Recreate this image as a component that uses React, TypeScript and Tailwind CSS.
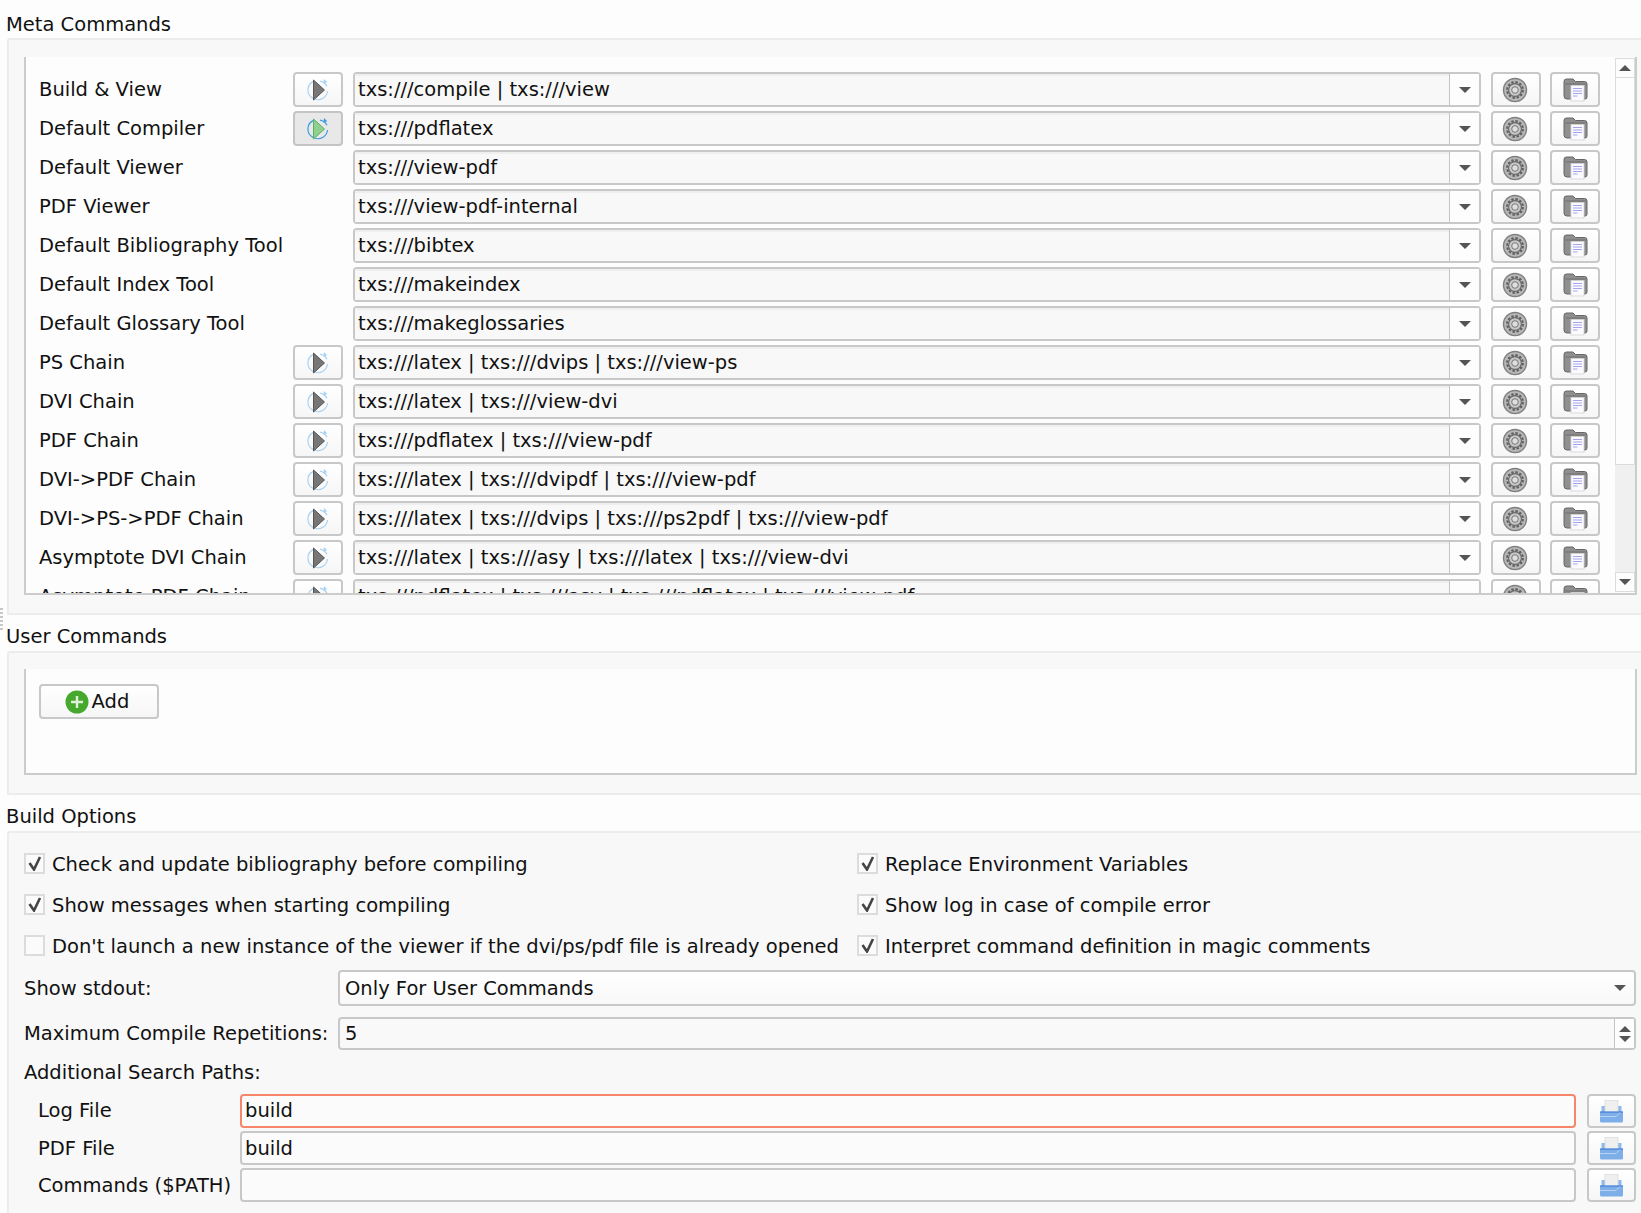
import type { ReactNode } from 'react';

const font = "font-['DejaVu_Sans',sans-serif]";

const commands = [
  { label: 'Build & View', value: 'txs:///compile | txs:///view', run: 'normal' },
  { label: 'Default Compiler', value: 'txs:///pdflatex', run: 'active' },
  { label: 'Default Viewer', value: 'txs:///view-pdf' },
  { label: 'PDF Viewer', value: 'txs:///view-pdf-internal' },
  { label: 'Default Bibliography Tool', value: 'txs:///bibtex' },
  { label: 'Default Index Tool', value: 'txs:///makeindex' },
  { label: 'Default Glossary Tool', value: 'txs:///makeglossaries' },
  { label: 'PS Chain', value: 'txs:///latex | txs:///dvips | txs:///view-ps', run: 'normal' },
  { label: 'DVI Chain', value: 'txs:///latex | txs:///view-dvi', run: 'normal' },
  { label: 'PDF Chain', value: 'txs:///pdflatex | txs:///view-pdf', run: 'normal' },
  { label: 'DVI->PDF Chain', value: 'txs:///latex | txs:///dvipdf | txs:///view-pdf', run: 'normal' },
  { label: 'DVI->PS->PDF Chain', value: 'txs:///latex | txs:///dvips | txs:///ps2pdf | txs:///view-pdf', run: 'normal' },
  { label: 'Asymptote DVI Chain', value: 'txs:///latex | txs:///asy | txs:///latex | txs:///view-dvi', run: 'normal' },
  { label: 'Asymptote PDF Chain', value: 'txs:///pdflatex | txs:///asy | txs:///pdflatex | txs:///view-pdf', run: 'normal' },
];

const btn =
  'flex items-center justify-center shrink-0 rounded-[4px] border-2 border-[#c8c8c8] bg-gradient-to-b from-[#ffffff] to-[#f6f6f6]';

function RunIcon({ active }: { active?: boolean }) {
  const ring = active ? '#3d9be0' : '#a9d2f2';
  return (
    <svg width="24" height="24" viewBox="0 0 24 24" fill="none">
      <path d="M7 3.6A9.5 9.5 0 0 0 7 20.4" stroke={ring} strokeWidth="1.2" />
      <path d="M14 3.2c3 .5 5.5 2.4 7 5M21.5 13a9.5 9.5 0 0 1-13 8" stroke={ring} strokeWidth="1.2" />
      <path d="M18 1l3.3 3.2-3.9 1.3z" fill={ring} />
      <path
        d="M7.5 2L18.5 12 7.5 22z"
        fill={active ? '#8fd08f' : '#777'}
        stroke={active ? '#5cae6a' : '#555'}
        strokeWidth="1"
      />
    </svg>
  );
}

function GearIcon() {
  return (
    <svg width="26" height="26" viewBox="0 0 26 26" fill="none">
      <circle cx="13" cy="13" r="11.5" fill="#b8b8b8" stroke="#808080" strokeWidth="1.4" />
      <circle cx="13" cy="13" r="7.8" fill="none" stroke="#606060" strokeWidth="2.2" strokeDasharray="2.4 1.7" />
      <circle cx="13" cy="13" r="6.4" fill="#c8c8c8" stroke="#666" strokeWidth="1.1" />
      <circle cx="13" cy="13" r="3.3" fill="#dedede" stroke="#777" strokeWidth="1" />
    </svg>
  );
}

function FolderIcon() {
  return (
    <svg width="25" height="24" viewBox="0 0 25 24" fill="none">
      <path
        d="M1 3.5Q1 1 3.5 1h6.5l2.5 2.5h9Q24 3.5 24 6v13q0 2-2 2H4q-3 0-3-3z"
        fill="#8f8f8f"
        stroke="#666"
        strokeWidth="1"
      />
      <path d="M2.5 6h20" stroke="#6f6f6f" strokeWidth="1" />
      <rect x="8" y="7.5" width="13" height="15.5" fill="#fbfbff" stroke="#d4d4d4" strokeWidth="0.8" />
      <path d="M10 10.5h9M10 13h9M10 15.5h9M10 18h4.5" stroke="#a5a5ee" strokeWidth="1.1" />
    </svg>
  );
}

function SaveIcon() {
  return (
    <svg width="25" height="23" viewBox="0 0 25 23" fill="none">
      <path d="M2.5 6h20v9h-20z" fill="#8fb9ec" />
      <rect x="6" y="0.5" width="13" height="12" fill="#efefef" stroke="#dcdcdc" strokeWidth="0.8" />
      <path d="M1 12h23v9q0 1.5-1.5 1.5h-20Q1 22.5 1 21z" fill="#7daee8" />
      <path d="M1 12h23" stroke="#3f7ed6" strokeWidth="1.2" />
      <path d="M1 16.5h16l4-4" stroke="#b8d2f3" strokeWidth="1" />
    </svg>
  );
}

function AddIcon() {
  return (
    <svg width="24" height="24" viewBox="0 0 24 24" className="shrink-0">
      <circle cx="12" cy="12" r="11.5" fill="#46a82c" />
      <path d="M12 6v12M6 12h12" stroke="#dff2d8" strokeWidth="2.4" />
    </svg>
  );
}

function ArrowDown() {
  return <span className="w-0 h-0 border-x-[6px] border-x-transparent border-t-[6px] border-t-[#555]" />;
}

function ArrowUp() {
  return <span className="w-0 h-0 border-x-[6px] border-x-transparent border-b-[6px] border-b-[#555]" />;
}

function Checkbox({ checked }: { checked?: boolean }) {
  return (
    <span className="w-[21px] h-[21px] shrink-0 flex items-center justify-center border-2 border-[#dcdcdc] bg-[#fbfbfb]">
      {checked && (
        <svg width="14" height="15" viewBox="0 0 14 15" fill="none">
          <path d="M1.5 7L6 13.5L12 1" stroke="#444" strokeWidth="2.6" />
        </svg>
      )}
    </span>
  );
}

function Check({ checked, children }: { checked?: boolean; children: ReactNode }) {
  return (
    <div className="flex items-center gap-[7px] h-[21px] whitespace-nowrap">
      <Checkbox checked={checked} />
      <span className="pt-[2px]">{children}</span>
    </div>
  );
}

function Section({
  title,
  titleClass = 'h-[36px] pt-[10px]',
  className,
  children,
}: {
  title: string;
  titleClass?: string;
  className: string;
  children: ReactNode;
}) {
  return (
    <section>
      <div className={titleClass + ' pl-[6px] leading-[24px]'}>{title}</div>
      <div className={'ml-[7px] border-2 border-r-0 rounded-tl-[3px] border-[#ececec] bg-[#f8f8f8] ' + className}>
        {children}
      </div>
    </section>
  );
}

function CommandRow({ label, value, run }: { label: string; value: string; run?: string }) {
  return (
    <div className="flex items-center h-[35px] mb-[4px] shrink-0">
      <div className="w-[254px] shrink-0">{label}</div>
      <div className="w-[50px] shrink-0">
        {run && (
          <div
            className={
              run === 'active'
                ? 'flex items-center justify-center h-[35px] rounded-[4px] border-2 border-[#c4c4c4] bg-[#e8e8e8]'
                : btn + ' h-[35px]'
            }
          >
            <RunIcon active={run === 'active'} />
          </div>
        )}
      </div>
      <div className="ml-[10px] w-[1128px] h-[35px] flex rounded-[4px] border-2 border-[#c8c8c8] bg-[#fcfcfc] shrink-0">
        <div className="flex-1 flex items-center pl-[3px] pb-[1px] bg-[#f8f8f8] border-t-2 border-t-[#efefef] whitespace-nowrap">
          {value}
        </div>
        <div className="w-[30px] flex items-center justify-center border-l border-[#c4c4c4] bg-[#fdfdfd]">
          <ArrowDown />
        </div>
      </div>
      <div className={btn + ' ml-[10px] w-[50px] h-[35px] pr-[2px]'}>
        <GearIcon />
      </div>
      <div className={btn + ' ml-[9px] w-[50px] h-[35px] pt-[1px]'}>
        <FolderIcon />
      </div>
    </div>
  );
}

function Scrollbar() {
  return (
    <div className="w-[20px] shrink-0 mt-[1px] mb-[1px] flex flex-col bg-[#f0f0f0]">
      <div className="h-[20px] flex items-center justify-center bg-[#fdfdfd] border border-[#dcdcdc]">
        <ArrowUp />
      </div>
      <div className="h-[387px] bg-[#fdfdfd] border-x border-b border-[#dcdcdc]" />
      <div className="flex-1" />
      <div className="h-[20px] flex items-center justify-center bg-[#fdfdfd] border border-[#dcdcdc]">
        <ArrowDown />
      </div>
    </div>
  );
}

function PathRow({ label, value, error }: { label: string; value?: string; error?: boolean }) {
  const nudge = error ? '' : ' pt-[2px]';
  return (
    <div className="flex items-center h-[34px] mb-[3px] pl-[14px]">
      <div className={'w-[202px] shrink-0 whitespace-nowrap' + nudge}>{label}</div>
      <div
        className={
          'w-[1336px] h-[34px] flex items-center pl-[3px] rounded-[4px] border-2 bg-[#fbfbfb]' +
          nudge +
          (error ? ' border-[#f5866a]' : ' border-[#c8c8c8]')
        }
      >
        {value}
      </div>
      <div className={btn + ' ml-[11px] w-[49px] h-[34px]'}>
        <SaveIcon />
      </div>
    </div>
  );
}

export default function App() {
  return (
    <div className={font + ' relative w-[1641px] h-[1213px] overflow-hidden bg-[#fdfdfd] text-[19.5px] text-[#111]'}>
      <div className="absolute left-0 top-[608px] w-[3px] h-[24px] bg-[repeating-linear-gradient(to_bottom,#c8c8c8_0,#c8c8c8_2px,transparent_2px,transparent_4px)]" />

      <Section title="Meta Commands" titleClass="h-[38px] pt-[13px]" className="h-[577px] pl-[15px] pt-[17px]">
        <div className="h-[538px] mr-[4px] flex border-2 border-t-0 border-[#cccccc] bg-[#fdfdfd]">
          <div className="flex-1 overflow-hidden pl-[13px] pt-[15px] flex flex-col">
            {commands.map((c) => (
              <CommandRow key={c.label} label={c.label} value={c.value} run={c.run} />
            ))}
          </div>
          <Scrollbar />
        </div>
      </Section>

      <Section title="User Commands" className="h-[144px] pl-[15px] pt-[16px]">
        <div className="h-[106px] mr-[4px] pl-[13px] pt-[15px] border-2 border-t-0 border-[#cccccc] bg-[#fdfdfd]">
          <div className={btn + ' w-[120px] h-[35px] gap-[3px] pr-[4px]'}>
            <AddIcon />
            <span>Add</span>
          </div>
        </div>
      </Section>

      <Section title="Build Options" className="h-[400px] pl-[15px] pt-[20px] pr-[5px] whitespace-nowrap">
        <div className="grid grid-cols-[833px_1fr] gap-y-[20px] mb-[14px]">
          <Check checked>Check and update bibliography before compiling</Check>
          <Check checked>Replace Environment Variables</Check>
          <Check checked>Show messages when starting compiling</Check>
          <Check checked>Show log in case of compile error</Check>
          <Check>Don't launch a new instance of the viewer if the dvi/ps/pdf file is already opened</Check>
          <Check checked>Interpret command definition in magic comments</Check>
        </div>
        <div className="flex items-center h-[36px] mb-[11px]">
          <div className="w-[314px] shrink-0 pt-[2px]">Show stdout:</div>
          <div className="flex-1 h-[36px] flex items-center justify-between pl-[5px] pr-[8px] rounded-[4px] border-2 border-[#c8c8c8] bg-gradient-to-b from-[#ffffff] to-[#f8f8f8]">
            <span className="pt-[2px]">Only For User Commands</span>
            <ArrowDown />
          </div>
        </div>
        <div className="flex items-center h-[33px] mb-[10px]">
          <div className="w-[314px] shrink-0">Maximum Compile Repetitions:</div>
          <div className="flex-1 h-[33px] flex rounded-[4px] border-2 border-[#c8c8c8] bg-[#f9f9f9]">
            <div className="flex-1 flex items-center pl-[5px]">5</div>
            <div className="w-[20px] flex flex-col items-center justify-center gap-[4px] border-l border-[#c4c4c4] bg-[#fdfdfd]">
              <ArrowUp />
              <ArrowDown />
            </div>
          </div>
        </div>
        <div className="h-[24px] pt-[1px] leading-[24px] mb-[10px]">Additional Search Paths:</div>
        <PathRow label="Log File" value="build" error />
        <PathRow label="PDF File" value="build" />
        <PathRow label="Commands ($PATH)" />
      </Section>
    </div>
  );
}
